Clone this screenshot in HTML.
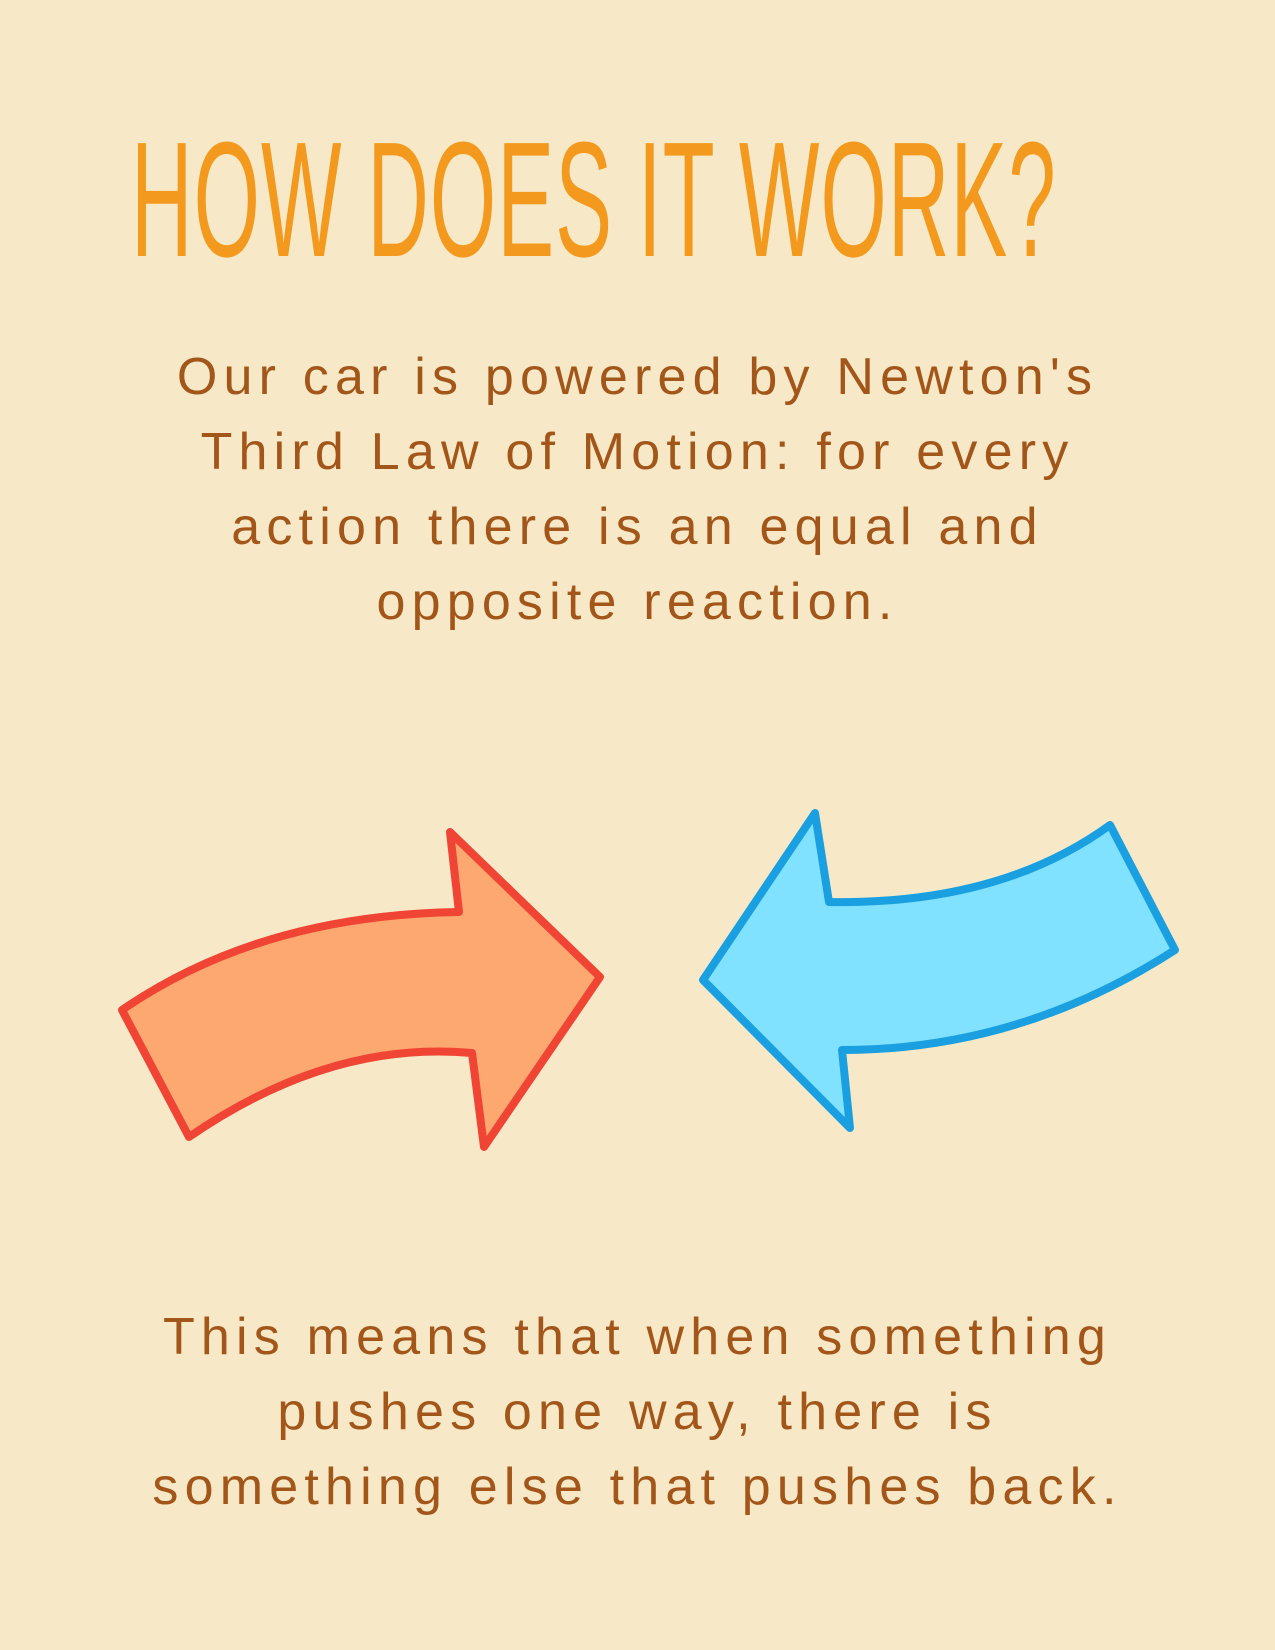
<!DOCTYPE html>
<html><head><meta charset="utf-8"><style>
html,body{margin:0;padding:0}
body{width:1275px;height:1650px;background:#F7E9C7;position:relative;overflow:hidden;font-family:"Liberation Sans",sans-serif}
.title{position:absolute;left:131px;top:118px;font-size:164px;line-height:164px;color:#F39A1E;white-space:nowrap;transform-origin:0 0;transform:scaleX(0.52);letter-spacing:2px}
.p{position:absolute;left:0;width:1275px;text-align:center;color:#A3561A;font-size:52px;letter-spacing:6.2px;line-height:75px;white-space:nowrap}
</style></head><body>
<div class="title">HOW DOES IT WORK?</div>
<div class="p" style="top:340px">Our car is powered by Newton's<br>Third Law of Motion: for every<br>action there is an equal and<br>opposite reaction.</div>
<svg width="1275" height="1650" style="position:absolute;left:0;top:0">
<path d="M122 1010 Q260 915 459 912 L450 832 L600 977 L484 1147 L472 1053 Q330 1040 189 1137 Z" fill="#FCA870" stroke="#F04434" stroke-width="8" stroke-linejoin="round"/>
<path d="M703 980 L815 813 L829 902 Q1000 905 1110 825 L1175 950 Q1020 1050 842 1050 L850 1128 Z" fill="#80E2FE" stroke="#1AA0E0" stroke-width="8" stroke-linejoin="round"/>
</svg>
<div class="p" style="top:1300px">This means that when something<br>pushes one way, there is<br>something else that pushes back.</div>
</body></html>
